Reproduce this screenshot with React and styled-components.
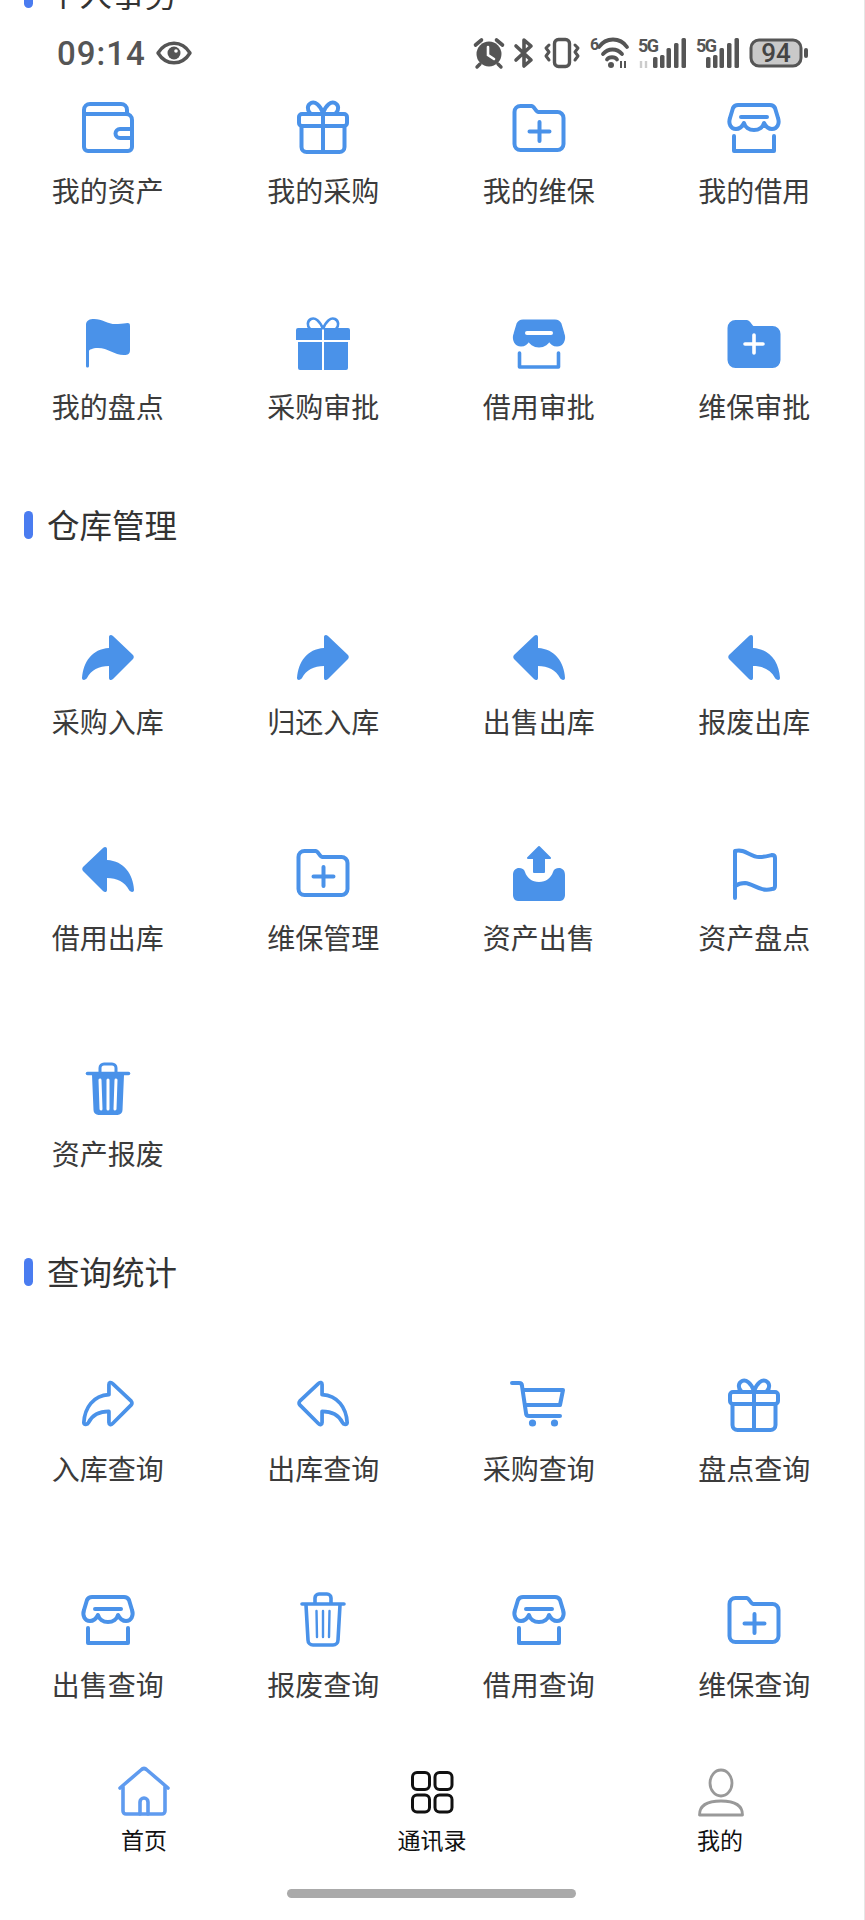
import React from 'react';
import styled, { createGlobalStyle } from 'styled-components';

const BLUE = '#4a92e9';

const GlobalStyle = createGlobalStyle`
	html, body {
		margin: 0;
		padding: 0;
		background: #fff;
	}
	body {
		font-family: 'Noto Sans CJK SC', 'Noto Sans', sans-serif;
	}
`;

const Page = styled.div`
	position: relative;
	width: 865px;
	height: 1920px;
	box-sizing: border-box;
	border-right: 1px solid #e6e6e6;
	overflow: hidden;
	background: #fff;
`;

const Content = styled.div`
	margin-top: -36px;
`;

const Section = styled.section`
	& + & {
		margin-top: 39px;
	}
`;

const Heading = styled.h2`
	display: flex;
	align-items: center;
	gap: 14px;
	height: 60px;
	margin: 0;
	padding-left: 24px;
	font-size: 32.5px;
	font-weight: 400;
	color: #333;
`;

const HeadingMark = styled.span`
	width: 9px;
	height: 28px;
	border-radius: 5px;
	background: #4a7cf0;
`;

const HeadingText = styled.span`
	padding-bottom: 3px;
`;

const Grid = styled.div`
	display: grid;
	grid-template-columns: repeat(4, 215.5px);
	grid-auto-rows: 216px;
`;

const Item = styled.div`
	display: flex;
	flex-direction: column;
	align-items: center;
	padding-top: 74px;
`;

const Label = styled.span`
	margin-top: 14px;
	font-size: 28px;
	line-height: 36px;
	color: #3b3b3b;
`;

const Glyph = styled.svg`
	display: block;
	width: 60px;
	height: 60px;
	overflow: visible;
	color: ${BLUE};
`;

const StatusBar = styled.div`
	position: absolute;
	top: 10px;
	left: 0;
	right: 0;
	height: 78px;
	display: flex;
	align-items: center;
	justify-content: space-between;
	box-sizing: border-box;
	padding: 8px 55px 0 57px;
	background: #fff;
	color: #555;
`;

const StatusLeft = styled.div`
	display: flex;
	align-items: center;
	gap: 10px;
`;

const Clock = styled.span`
	font-family: Roboto, 'Liberation Sans', sans-serif;
	font-size: 33px;
	font-weight: 500;
	letter-spacing: 1px;
`;

const StatusRight = styled.div`
	display: flex;
	align-items: center;
	gap: 10px;
`;

const StatusIcon = styled.svg`
	display: block;
	height: 30px;
	width: ${(p) => p.$w}px;
	overflow: visible;
	color: #555;
`;

const TabBar = styled.nav`
	display: grid;
	grid-template-columns: repeat(3, 288px);
`;

const Tab = styled.div`
	display: flex;
	flex-direction: column;
	align-items: center;
	padding-top: 28px;
`;

const TabLabel = styled.span`
	margin-top: 2px;
	font-size: 23px;
	line-height: 30px;
	color: #111;
`;

const HomeBar = styled.div`
	width: 289px;
	height: 9px;
	margin: 35px 0 0 287px;
	border-radius: 5px;
	background: #aaa;
`;

const Line = ({ shift = 0, children, width = 4 }) => (
	<Glyph
		viewBox={`0 ${shift} 60 60`}
		fill="none"
		stroke="currentColor"
		strokeWidth={width}
		strokeLinecap="round"
		strokeLinejoin="round"
	>
		{children}
	</Glyph>
);

const Solid = ({ shift = 0, children }) => (
	<Glyph viewBox={`0 ${shift} 60 60`} fill="currentColor">
		{children}
	</Glyph>
);

const STORE = 'M14 7h32c3 0 4 1 5 3l3 10c2 6-1 11-6 11-3 0-6-2-8-6-1 4-5 7-10 7s-9-3-10-7c-2 4-5 6-8 6-5 0-8-5-6-11l3-10c1-2 2-3 5-3z';
const FOLDER = 'M5.5 14a6 6 0 0 1 6-6h11c3 0 4 6 7 6h19a6 6 0 0 1 6 6v26a6 6 0 0 1-6 6h-37a6 6 0 0 1-6-6z';
const FLAG_OUT = 'M11 55V8c10-3 15 6 24 6 6 0 9-1 13-2 2 0 3 1 3 3v28c0 2-1 3-3 3-12 3-18-5-27-6-4 0-7 1-10 3';
const ARROW = 'M31 7c0-2 2-3 4-1l20 19c1 1 1 3 0 4L35 49c-2 2-4 1-4-1V36C21 36 13 40 9 48c-1 2-5 3-5 0C5 32 14 19 31 18z';
const GIFT_BOW = 'M30 15C27 7 22 3 18 5c-4 2-4 7-1 10M30 15c3-8 8-12 12-10 4 2 4 7 1 10';

const Wallet = ({ shift }) => (
	<Line shift={shift}>
		<path d="M6 16V12a6 6 0 0 1 6-6h31a6 6 0 0 1 6 6v4" />
		<path d="M6 16h42a6 6 0 0 1 6 6v27a4 4 0 0 1-4 4H10a4 4 0 0 1-4-4V16" />
		<path d="M54 31H42a4.5 4.5 0 0 0 0 9h12" />
	</Line>
);

const Gift = ({ shift }) => (
	<Line shift={shift}>
		<path d={GIFT_BOW} />
		<rect x="6" y="16" width="48" height="12" rx="3" />
		<path d="M8.5 28v21a5 5 0 0 0 5 5h33a5 5 0 0 0 5-5V28M30 16v38" />
	</Line>
);

const GiftSolid = ({ shift }) => (
	<Solid shift={shift}>
		<path d={GIFT_BOW} fill="none" stroke="currentColor" strokeWidth="2.6" />
		<path d="M5 14h24v12H3V16a2 2 0 0 1 2-2zM31 14h24a2 2 0 0 1 2 2v10H31zM5 28h24v28H7a2 2 0 0 1-2-2zM31 28h24v26a2 2 0 0 1-2 2H31z" />
	</Solid>
);

const Folder = ({ shift }) => (
	<Line shift={shift}>
		<path d={FOLDER} />
		<path d="M20.5 33.5h20M30.5 24v19" />
	</Line>
);

const FolderSolid = ({ shift }) => (
	<Solid shift={shift}>
		<path d={FOLDER} stroke="currentColor" strokeWidth="4" strokeLinejoin="round" />
		<path d="M21 30h18M30 21v18" fill="none" stroke="#fff" strokeWidth="3.6" strokeLinecap="round" />
	</Solid>
);

const Store = ({ shift }) => (
	<Line shift={shift}>
		<path d={STORE} />
		<path d="M17 19h26M10 38v15h40V38" />
	</Line>
);

const StoreSolid = ({ shift }) => (
	<Solid shift={shift}>
		<path d={STORE} stroke="currentColor" strokeWidth="3" strokeLinejoin="round" />
		<path d="M18 19h24" fill="none" stroke="#fff" strokeWidth="4" strokeLinecap="round" />
		<path d="M10.5 39v14h39V39" fill="none" stroke="currentColor" strokeWidth="3.6" strokeLinejoin="round" strokeLinecap="round" />
	</Solid>
);

const FlagSolid = ({ shift }) => (
	<Solid shift={shift}>
		<path d="M8 11C8 6 12 5 16 5c9 0 14 6 24 5 8 0 12-3 12 2v24c0 4-2 5-6 5-10 0-16-7-26-7-6 0-9 2-9 3v15c0 2-3 2-3 0z" />
	</Solid>
);

const FlagOutline = ({ shift }) => (
	<Line shift={shift}>
		<path d={FLAG_OUT} />
	</Line>
);

const ArrowSolid = ({ shift, left }) => (
	<Solid shift={shift}>
		<path d={ARROW} transform={left ? 'matrix(-1 0 0 1 60 0)' : undefined} />
	</Solid>
);

const ArrowOutline = ({ shift, left }) => (
	<Line shift={shift} width={4}>
		<g transform="translate(30 28) scale(.93) translate(-30 -28)">
			<path d={ARROW} transform={left ? 'matrix(-1 0 0 1 60 0)' : undefined} />
		</g>
	</Line>
);

const Upload = ({ shift }) => (
	<Solid shift={shift}>
		<path d="M30 4l11 11h-6v14H25V15h-6z" stroke="currentColor" strokeWidth="2" strokeLinejoin="round" />
		<path d="M4 32c0-5 3-7 6-7s5 1 6 4c2 6 7 10 14 10s12-4 14-10c1-3 3-4 6-4s6 2 6 7v20c0 3-2 6-5 6H9c-3 0-5-3-5-6z" />
	</Solid>
);

const TrashSolid = ({ shift }) => (
	<Solid shift={shift}>
		<path d="M22 13V8a4 4 0 0 1 4-4h8a4 4 0 0 1 4 4v5" fill="none" stroke="currentColor" strokeWidth="3" />
		<path d="M9.5 13.5h41" stroke="currentColor" strokeWidth="3.6" strokeLinecap="round" />
		<path d="M14 15h32l-1.5 35a5 5 0 0 1-5 5h-19a5 5 0 0 1-5-5z" />
		<path d="M22 20l1 29M30 20v29M38 20l-1 29" stroke="#fff" strokeWidth="3" strokeLinecap="round" />
	</Solid>
);

const TrashOutline = ({ shift }) => (
	<Line shift={shift} width={3.6}>
		<path d="M22 13V8a4 4 0 0 1 4-4h8a4 4 0 0 1 4 4v5M9 14h42" />
		<path d="M13 15l2 35a5 5 0 0 0 5 5h20a5 5 0 0 0 5-5l2-35" />
		<path d="M23.5 21l.5 26M30 21v26M36.5 21l-.5 26" strokeWidth="2.4" />
	</Line>
);

const Cart = ({ shift }) => (
	<Line shift={shift}>
		<path d="M3 7h7c2 0 3 1 3 3l4 27c0 2 1 3 3 3h31" />
		<path d="M14 14h40l-3 15H16" />
		<circle cx="23.5" cy="47" r="3.6" fill="currentColor" stroke="none" />
		<circle cx="45.5" cy="47" r="3.6" fill="currentColor" stroke="none" />
	</Line>
);

const HomeIcon = () => (
	<Line width={3.6}>
		<g stroke="#5f9bef">
			<path d="M6 26L27 8c2-2 4-2 6 0l21 18" />
			<path d="M9 25v24a3 3 0 0 0 3 3h36a3 3 0 0 0 3-3V25" />
			<path d="M26 52V40a4 4 0 0 1 8 0v12" />
		</g>
	</Line>
);

const AppsIcon = () => (
	<Line width={3}>
		<g stroke="#111">
			<rect x="10.5" y="10.5" width="17" height="17" rx="4.5" />
			<rect x="33" y="10.5" width="17" height="17" rx="4.5" />
			<rect x="10.5" y="33" width="17" height="17" rx="4.5" />
			<rect x="33" y="33" width="17" height="17" rx="4.5" />
		</g>
	</Line>
);

const UserIcon = () => (
	<Line width={2.8}>
		<g stroke="#999">
			<ellipse cx="31" cy="21" rx="11" ry="13" />
			<path d="M9.5 53c0-10 9-14 21.500-14s21.500 4 21.500 14z" />
		</g>
	</Line>
);

const Alarm = () => (
	<StatusIcon $w={30} viewBox="0 0 30 30">
		<circle cx="15" cy="16" r="12.5" fill="currentColor" />
		<path d="M1.500 7l6-5M28.500 7l-6-5" stroke="currentColor" strokeWidth="3.6" strokeLinecap="round" />
		<path d="M6 26l-3 3M24 26l3 3" stroke="currentColor" strokeWidth="3.4" strokeLinecap="round" />
		<path d="M14 9v8l6 4" fill="none" stroke="#fff" strokeWidth="2.6" strokeLinecap="round" />
	</StatusIcon>
);

const Bluetooth = () => (
	<StatusIcon $w={20} viewBox="0 0 20 30">
		<path d="M2 8l15 14-7 6V2l7 6L2 22" fill="none" stroke="currentColor" strokeWidth="3.6" strokeLinejoin="round" strokeLinecap="round" />
	</StatusIcon>
);

const Vibrate = () => (
	<StatusIcon $w={36} viewBox="0 0 36 30">
		<g fill="none" stroke="currentColor" strokeLinecap="round" strokeLinejoin="round">
			<rect x="10.500" y="1.500" width="15" height="27" rx="4" strokeWidth="3.400" />
			<path d="M5 7L2 10l3 4-3 4 3 4" strokeWidth="3" />
			<path d="M31 7l3 3-3 4 3 4-3 4" strokeWidth="3" />
		</g>
	</StatusIcon>
);

const StatusLabel = styled.text`
	font-family: Roboto, 'Liberation Sans', sans-serif;
	font-weight: 700;
	font-size: ${(p) => p.$size}px;
	letter-spacing: ${(p) => p.$spacing || 0}px;
	fill: currentColor;
`;

const Wifi = () => (
	<StatusIcon $w={38} viewBox="0 0 38 30">
		<StatusLabel x="0" y="12" $size={16}>6</StatusLabel>
		<g fill="none" stroke="currentColor" strokeWidth="3.8" strokeLinecap="round">
			<path d="M9 9c7-10 21-10 28 0" />
			<path d="M13 16c5-6 14-6 19 0" />
			<path d="M17 21.500c2-3 8-3 10 0" />
		</g>
		<circle cx="21" cy="27" r="3" fill="currentColor" />
		<path d="M31 23v7M35 23v7" stroke="currentColor" strokeWidth="2" />
	</StatusIcon>
);

const Signal = ({ w, arrows }) => (
	<StatusIcon $w={w} viewBox={`0 0 ${w} 30`}>
		<StatusLabel x="0" y="14" $size={18} $spacing={-1.500}>5G</StatusLabel>
		{arrows && <path d="M3 23v7M8 23v7" stroke="#ccc" strokeWidth="2.4" />}
		<g fill="currentColor">
			<rect x={w - 33} y="19" width="4.500" height="11" rx="1.500" />
			<rect x={w - 26} y="17" width="4.500" height="13" rx="1.500" />
			<rect x={w - 19.500} y="10" width="4.500" height="20" rx="1.500" />
			<rect x={w - 12} y="5" width="4.500" height="25" rx="1.500" />
			<rect x={w - 4.500} y="0" width="4.500" height="30" rx="1.500" />
		</g>
	</StatusIcon>
);

const Battery = () => (
	<StatusIcon $w={60} viewBox="0 0 60 30">
		<rect x="2" y="2" width="50" height="26" rx="8" fill="#c9c9c9" stroke="currentColor" strokeWidth="3" />
		<rect x="55" y="10" width="4" height="10" rx="2" fill="currentColor" />
		<text x="27" y="24" textAnchor="middle" fontFamily="Roboto, sans-serif" fontSize="26" fontWeight="500" fill="#444">94</text>
	</StatusIcon>
);

const EyeIcon = () => (
	<StatusIcon $w={36} viewBox="0 0 36 30">
		<path d="M2 15c8-13 24-13 32 0-8 13-24 13-32 0z" fill="none" stroke="currentColor" strokeWidth="3.4" strokeLinejoin="round" />
		<circle cx="18" cy="15" r="6.500" fill="currentColor" />
		<circle cx="20" cy="13" r="1.800" fill="#fff" />
	</StatusIcon>
);

const sections = [
	{
		title: '个人事务',
		items: [
			['我的资产', <Wallet />],
			['我的采购', <Gift />],
			['我的维保', <Folder />],
			['我的借用', <Store />],
			['我的盘点', <FlagSolid />],
			['采购审批', <GiftSolid />],
			['借用审批', <StoreSolid />],
			['维保审批', <FolderSolid />],
		],
	},
	{
		title: '仓库管理',
		items: [
			['采购入库', <ArrowSolid shift={-1} />],
			['归还入库', <ArrowSolid shift={-1} />],
			['出售出库', <ArrowSolid shift={-1} left />],
			['报废出库', <ArrowSolid shift={-1} left />],
			['借用出库', <ArrowSolid shift={3} left />],
			['维保管理', <Folder shift={2} />],
			['资产出售', <Upload shift={2} />],
			['资产盘点', <FlagOutline shift={2} />],
			['资产报废', <TrashSolid shift={1} />],
		],
	},
	{
		title: '查询统计',
		items: [
			['入库查询', <ArrowOutline />],
			['出库查询', <ArrowOutline left />],
			['采购查询', <Cart />],
			['盘点查询', <Gift />],
			['出售查询', <Store shift={2} />],
			['报废查询', <TrashOutline shift={2} />],
			['借用查询', <Store shift={2} />],
			['维保查询', <Folder shift={2} />],
		],
	},
];

const App = () => (
	<Page>
		<GlobalStyle />
		<Content>
			{sections.map((section) => (
				<Section key={section.title}>
					<Heading>
						<HeadingMark />
						<HeadingText>{section.title}</HeadingText>
					</Heading>
					<Grid>
						{section.items.map(([label, icon]) => (
							<Item key={label}>
								{icon}
								<Label>{label}</Label>
							</Item>
						))}
					</Grid>
				</Section>
			))}
		</Content>
		<TabBar>
			<Tab>
				<HomeIcon />
				<TabLabel>首页</TabLabel>
			</Tab>
			<Tab>
				<AppsIcon />
				<TabLabel>通讯录</TabLabel>
			</Tab>
			<Tab>
				<UserIcon />
				<TabLabel>我的</TabLabel>
			</Tab>
		</TabBar>
		<HomeBar />
		<StatusBar>
			<StatusLeft>
				<Clock>09:14</Clock>
				<EyeIcon />
			</StatusLeft>
			<StatusRight>
				<Alarm />
				<Bluetooth />
				<Vibrate />
				<Wifi />
				<Signal w={48} arrows />
				<Signal w={43} />
				<Battery />
			</StatusRight>
		</StatusBar>
	</Page>
);

export default App;
